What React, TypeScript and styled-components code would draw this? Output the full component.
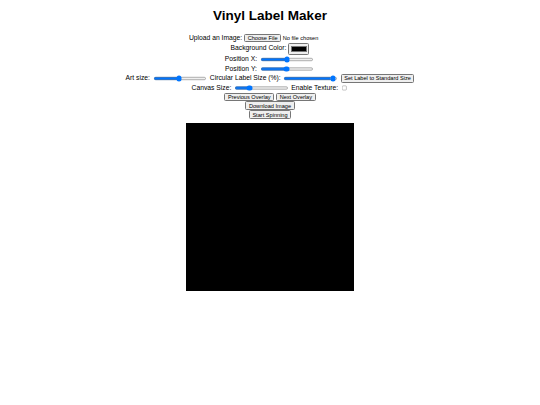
import React, { ReactElement, useState } from "react";
import styled, { createGlobalStyle } from "styled-components";

const GlobalStyle = createGlobalStyle`
  body {
    margin: 0;
    background: #ffffff;
    font-family: "Liberation Sans", Arial, sans-serif;
    color: #000000;
  }
`;

// The page was laid out for a 1280px wide window and shown at 540px
const PageStyled = styled.div`
  zoom: 0.421875;
  padding: 0 8px 8px;
  text-align: center;
  font-size: 16px;
`;

const TitleStyled = styled.h1`
  font-size: 32px;
  font-weight: bold;
  margin: 20px 0 23px;
`;

const RowStyled = styled.div<{ $tight?: boolean }>`
  padding: ${({ $tight }) => ($tight ? "0" : "1px 0")};
`;

const InputStyled = styled.input`
  font-family: "Liberation Sans", Arial, sans-serif;
  font-size: 13.33px;
  vertical-align: middle;
`;

const ButtonStyled = styled.button`
  font-family: "Liberation Sans", Arial, sans-serif;
  font-size: 13.33px;
  vertical-align: middle;
`;

const CanvasStyled = styled.div`
  display: block;
  width: 400px;
  height: 400px;
  margin: 8px auto 0;
  background: #000000;
`;

const texts = {
  title: "Vinyl Label Maker",
  upload: "Upload an Image:",
  background: "Background Color:",
  positionX: "Position X:",
  positionY: "Position Y:",
  artSize: "Art size:",
  labelSize: "Circular Label Size (%):",
  standardSize: "Set Label to Standard Size",
  canvasSize: "Canvas Size:",
  texture: "Enable Texture:",
  previous: "Previous Overlay",
  next: "Next Overlay",
  download: "Download Image",
  spin: "Start Spinning",
};

const App = (): ReactElement => {
  const [posX, setPosX] = useState(0);
  const [posY, setPosY] = useState(0);
  const [artSize, setArtSize] = useState(48);
  const [labelSize, setLabelSize] = useState(97);
  const [canvasSize, setCanvasSize] = useState(400);

  return (
    <PageStyled>
      <GlobalStyle />
      <TitleStyled>{texts.title}</TitleStyled>
      <RowStyled>
        <label>{texts.upload} </label>
        <InputStyled type="file" />
      </RowStyled>
      <RowStyled>
        <label>{texts.background} </label>
        <InputStyled type="color" defaultValue="#000000" />
      </RowStyled>
      <RowStyled>
        <label>{texts.positionX} </label>
        <InputStyled
          type="range"
          min={-100}
          max={100}
          value={posX}
          onChange={(e) => setPosX(Number(e.target.value))}
        />
      </RowStyled>
      <RowStyled>
        <label>{texts.positionY} </label>
        <InputStyled
          type="range"
          min={-100}
          max={100}
          value={posY}
          onChange={(e) => setPosY(Number(e.target.value))}
        />
      </RowStyled>
      <RowStyled>
        <label>{texts.artSize} </label>
        <InputStyled
          type="range"
          min={0}
          max={100}
          value={artSize}
          onChange={(e) => setArtSize(Number(e.target.value))}
        />{" "}
        <label>{texts.labelSize} </label>
        <InputStyled
          type="range"
          min={0}
          max={100}
          value={labelSize}
          onChange={(e) => setLabelSize(Number(e.target.value))}
        />{" "}
        <ButtonStyled>{texts.standardSize}</ButtonStyled>
      </RowStyled>
      <RowStyled>
        <label>{texts.canvasSize} </label>
        <InputStyled
          type="range"
          min={200}
          max={1000}
          value={canvasSize}
          onChange={(e) => setCanvasSize(Number(e.target.value))}
        />{" "}
        <label>{texts.texture} </label>
        <InputStyled type="checkbox" />
      </RowStyled>
      <RowStyled $tight>
        <ButtonStyled>{texts.previous}</ButtonStyled>{" "}
        <ButtonStyled>{texts.next}</ButtonStyled>
      </RowStyled>
      <RowStyled $tight>
        <ButtonStyled>{texts.download}</ButtonStyled>
      </RowStyled>
      <RowStyled $tight>
        <ButtonStyled>{texts.spin}</ButtonStyled>
      </RowStyled>
      <CanvasStyled />
    </PageStyled>
  );
};

export default App;
